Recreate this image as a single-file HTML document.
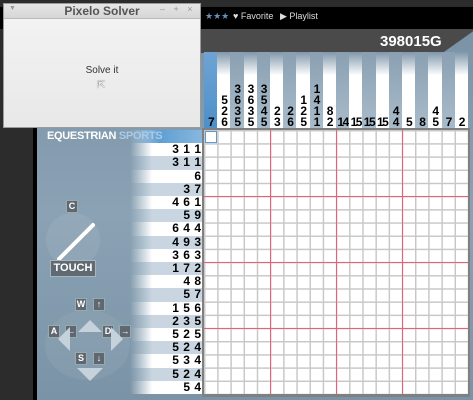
<!DOCTYPE html>
<html><head><style>
*{margin:0;padding:0;box-sizing:border-box}
body{width:473px;height:400px;overflow:hidden;position:relative;background:#2c2c2c;font-family:"Liberation Sans",sans-serif}
.a{position:absolute}
.cc{position:absolute;top:52px;height:78px;width:13.2px;display:flex;flex-direction:column;justify-content:flex-end;align-items:center;padding-bottom:2px;font:bold 12px/11px "Liberation Sans",sans-serif;color:#000;letter-spacing:-1.5px}
.w{background:linear-gradient(#7f97ab,#fff 30%,#fff)}
.b{background:linear-gradient(#8aa0b2,#a9bccb)}
.rc{position:absolute;left:130px;width:74px;height:13.2px;text-align:right;padding-right:3px;font:bold 12px/13px "Liberation Sans",sans-serif;color:#000;word-spacing:1px}
.rw{background:linear-gradient(90deg,rgba(255,255,255,0) 0%,#fff 30%,#fff)}
.rb{background:linear-gradient(90deg,rgba(200,215,228,0) 0%,#c9d6e1 30%,#c9d6e1)}
.btn{position:absolute;background:#5f6870;border:1px solid #9aa;color:#fff;font:bold 9px/11px "Liberation Sans",sans-serif;text-align:center;width:12px;height:13px}
</style></head><body>
<div class="a" style="left:0;top:7px;width:473px;height:22px;background:#000"></div>
<div class="a" style="left:205px;top:11px;color:#6b8fb5;font-size:9px">★★★</div>
<div class="a" style="left:233px;top:11px;color:#ddd;font-size:9px">♥ Favorite</div>
<div class="a" style="left:280px;top:11px;color:#ddd;font-size:9px">▶ Playlist</div>
<div class="a" style="left:33px;top:29px;width:440px;height:371px;background:linear-gradient(#7b93a6,#8aa2b4 50%,#7a93a6)"></div>
<div class="a" style="left:33px;top:29px;width:4px;height:371px;background:#000"></div>
<div class="a" style="left:37px;top:29px;width:436px;height:24px;background:#4a4a4a;clip-path:polygon(0 0,100% 0,100% 10%,93% 100%,0 100%)"></div>
<div class="a" style="left:380px;top:33px;color:#fff;font:bold 15px 'Liberation Sans',sans-serif;letter-spacing:0">398015G</div>

<div class="a" style="left:204px;top:52px;width:13.2px;height:78px;background:linear-gradient(#6ea4d4,#4d8fc8)"></div>
<div id="cols"></div>
<div id="rows"></div>
<div class="a" style="left:130px;top:130px;width:74px;height:13.2px;background:linear-gradient(90deg,rgba(90,150,200,0),#5f9fd4 40%,#8ab8de)"></div>
<div class="a" style="left:47px;top:130px;color:#fff;font:bold 11px 'Liberation Sans',sans-serif;letter-spacing:-0.3px">EQUESTRIAN <span style="color:#a9cbe8">SPORTS</span></div>

<div class="a" style="left:202px;top:128px;width:268px;height:269px;background:#808080"></div>
<div class="a" style="left:204px;top:130px;width:264px;height:264px;background-color:#fff;background-image:linear-gradient(90deg,#c8c8c8 1.3px,transparent 1.3px),linear-gradient(#c8c8c8 1.3px,transparent 1.3px);background-size:13.2px 13.2px"></div>
<div class="a" style="left:270px;top:130px;width:1px;height:264px;background:#e8607a"></div>
<div class="a" style="left:336px;top:130px;width:1px;height:264px;background:#e8607a"></div>
<div class="a" style="left:402px;top:130px;width:1px;height:264px;background:#e8607a"></div>
<div class="a" style="left:204px;top:196px;width:264px;height:1px;background:#e8607a"></div>
<div class="a" style="left:204px;top:262px;width:264px;height:1px;background:#e8607a"></div>
<div class="a" style="left:204px;top:328px;width:264px;height:1px;background:#e8607a"></div>
<div class="a" style="left:205px;top:131px;width:12px;height:12px;border:1.5px solid #5a9ad6"></div>

<!-- controls -->
<div class="a" style="left:46px;top:213px;width:54px;height:54px;border-radius:50%;background:rgba(255,255,255,0.08)"></div>
<div class="btn" style="left:66px;top:200px">C</div>
<div class="a" style="left:50px;top:240px;width:52px;height:4px;background:#fff;transform:rotate(-45deg);border-radius:2px"></div>
<div class="a" style="left:50px;top:260px;width:46px;height:17px;background:#5f6a73;border:1px solid #a9b4bd;color:#fff;font:bold 11px/15px 'Liberation Sans',sans-serif;text-align:center">TOUCH</div>
<div class="a" style="left:45px;top:310px;width:85px;height:70px;border-radius:50%;background:rgba(255,255,255,0.06)"></div>
<div class="btn" style="left:75px;top:298px">W</div><div class="btn" style="left:93px;top:298px">↑</div>
<div class="btn" style="left:48px;top:325px">A</div><div class="btn" style="left:65px;top:325px">←</div>
<div class="btn" style="left:102px;top:325px">D</div><div class="btn" style="left:119px;top:325px">→</div>
<div class="btn" style="left:75px;top:352px">S</div><div class="btn" style="left:93px;top:352px">↓</div>
<div class="a" style="left:78px;top:308px;width:0;height:0;border:12px solid transparent;border-bottom-color:#c5d2dc"></div>
<div class="a" style="left:77px;top:368px;width:0;height:0;border:13px solid transparent;border-top-color:#c5d2dc"></div>
<div class="a" style="left:46px;top:327px;width:0;height:0;border:12px solid transparent;border-right-color:#c5d2dc"></div>
<div class="a" style="left:111px;top:327px;width:0;height:0;border:12px solid transparent;border-left-color:#c5d2dc"></div>

<!-- window -->
<div class="a" style="left:3px;top:3px;width:198px;height:125px;background:linear-gradient(#f4f4f4,#e8e8e8);border:1px solid #9a9a9a"></div>
<div class="a" style="left:4px;top:4px;width:196px;height:15px;background:linear-gradient(#e6e6e6,#d6d6d6);border-bottom:1px solid #bbb"></div>
<div class="a" style="left:9px;top:5px;color:#999;font-size:7px">▼</div>
<div class="a" style="left:0;top:4px;width:204px;text-align:center;color:#555;font:bold 12px/15px 'Liberation Sans',sans-serif">Pixelo Solver</div>
<div class="a" style="left:160px;top:4px;color:#999;font-size:9px;word-spacing:6px">– + ×</div>
<div class="a" style="left:0;top:65px;width:204px;text-align:center;color:#333;font-size:10px">Solve it</div>
<div class="a" style="left:97px;top:80px;color:#fff;font-size:10px;text-shadow:0 0 1px #000">⇱</div>

<script>
var cc=[["7"],["5","2","6"],["3","6","3","5"],["3","6","3","5"],["3","5","4","5"],["2","3"],["2","6"],["1","2","5"],["1","4","1","1"],["8","2"],["14"],["15"],["15"],["15"],["4","4"],["5"],["8"],["4","5"],["7"],["2"]];
var h="";
cc.forEach(function(c,i){var cls=i==0?"":(i%2?"w":"b");h+='<div class="cc '+cls+'" style="left:'+(204+i*13.2)+'px">'+c.map(function(d){return"<div>"+d+"</div>"}).join("")+"</div>"});
document.getElementById("cols").innerHTML=h;
var rc=["3","3 1 1","3 1 1","6","3 7","4 6 1","5 9","6 4 4","4 9 3","3 6 3","1 7 2","4 8","5 7","1 5 6","2 3 5","5 2 5","5 2 4","5 3 4","5 2 4","5 4"];
h="";
rc.forEach(function(c,i){h+='<div class="rc '+(i%2?"rw":"rb")+'" style="top:'+(130+i*13.2)+'px">'+c+"</div>"});
document.getElementById("rows").innerHTML=h;
</script>
</body></html>
